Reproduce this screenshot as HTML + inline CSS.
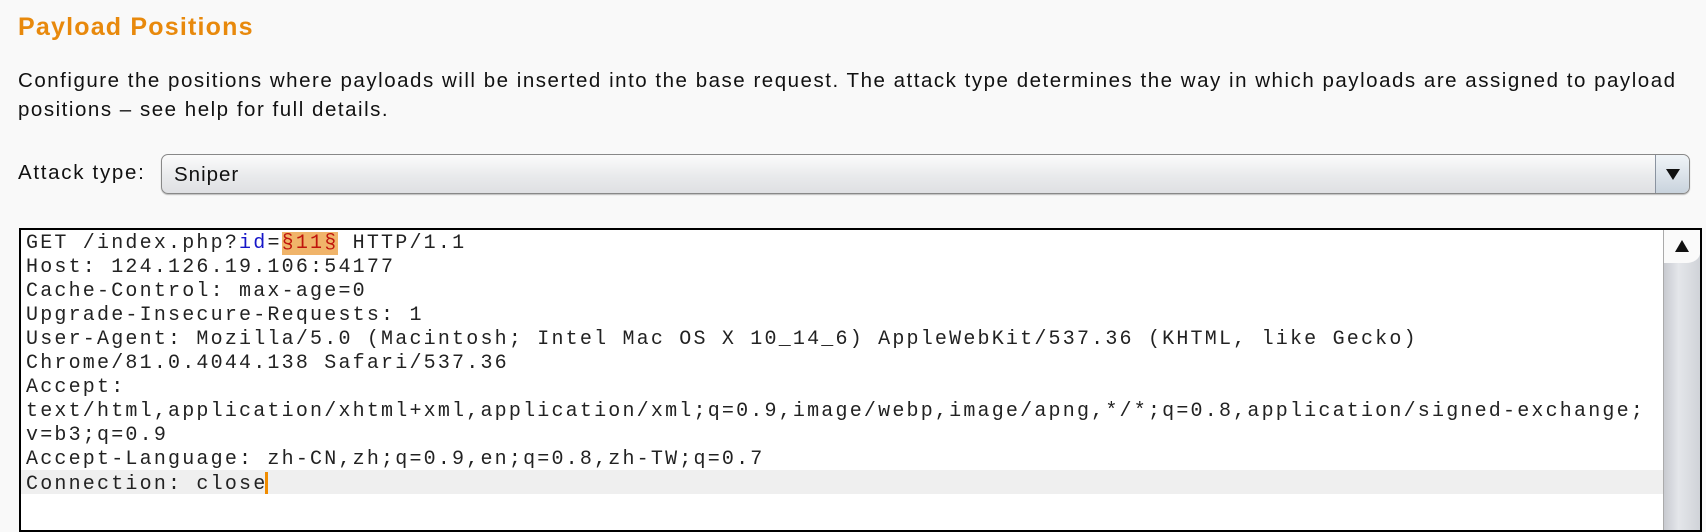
<!DOCTYPE html>
<html><head><meta charset="utf-8"><style>
html,body{margin:0;padding:0;width:1706px;height:520px;overflow:hidden;background:#f9f9f9;font-family:"Liberation Sans",sans-serif;}
.t{position:absolute;left:18px;top:13px;font-size:25px;letter-spacing:1.2px;font-weight:bold;color:#e8890c;white-space:nowrap;}
.d{position:absolute;left:18px;top:66px;font-size:20.5px;letter-spacing:1.52px;line-height:29px;color:#111;white-space:nowrap;}
.lab{position:absolute;left:18px;top:161px;font-size:20.5px;letter-spacing:1.7px;color:#111;}
.dd{position:absolute;left:161px;top:154px;width:1527px;height:38px;border:1px solid #888;border-radius:7px;background:linear-gradient(#fbfbfb,#e9eaec 55%,#dfe0e3);box-shadow:0 1px 1px #bbb;}
.dd span{position:absolute;left:12px;top:8px;font-size:20.5px;letter-spacing:1px;color:#111;}
.dd .ab{position:absolute;right:0;top:0;width:33px;height:38px;border-left:1px solid #8a93a0;border-radius:0 7px 7px 0;background:linear-gradient(#f0f4f8,#c9d3dd);}
.dd .ab:after{content:"";position:absolute;left:10px;top:14px;border-left:7px solid transparent;border-right:7px solid transparent;border-top:11px solid #111;}
.ed{position:absolute;left:19px;top:228px;width:1679px;height:300px;border:2px solid #000;background:#fff;}
.code{position:absolute;left:5px;top:2px;font-family:"Liberation Mono",monospace;font-size:20px;letter-spacing:2.2px;line-height:24px;color:#222;white-space:pre;}
.hl{position:absolute;left:0;top:240px;width:1642px;height:24px;background:#efefef;}
.p{background:#f0b46a;color:#c0140c;}
.b{color:#1616c8;}
.cur{display:inline-block;width:3px;height:22px;background:#f08c00;vertical-align:-5px;margin-left:-2px;}
.sb{position:absolute;right:0;top:0;width:36px;height:300px;background:linear-gradient(90deg,#c8cad0,#e4e6ea 40%,#d0d3d8);border-left:1px solid #aaa;}
.sb .up{position:absolute;left:0;top:0;width:36px;height:33px;background:#fafafa;border-bottom-right-radius:14px 10px;}
.sb .up:after{content:"";position:absolute;left:11px;top:10px;border-left:7px solid transparent;border-right:7px solid transparent;border-bottom:12px solid #111;}
</style></head><body>
<div class="t">Payload Positions</div>
<div class="d">Configure the positions where payloads will be inserted into the base request. The attack type determines the way in which payloads are assigned to payload<br>positions – see help for full details.</div>
<div class="lab">Attack type:</div>
<div class="dd"><span>Sniper</span><div class="ab"></div></div>
<div class="ed">
<div class="hl"></div>
<div class="code">GET /index.php?<span class="b">id</span>=<span class="p">§11§</span> HTTP/1.1
Host: 124.126.19.106:54177
Cache-Control: max-age=0
Upgrade-Insecure-Requests: 1
User-Agent: Mozilla/5.0 (Macintosh; Intel Mac OS X 10_14_6) AppleWebKit/537.36 (KHTML, like Gecko)
Chrome/81.0.4044.138 Safari/537.36
Accept:
text/html,application/xhtml+xml,application/xml;q=0.9,image/webp,image/apng,*/*;q=0.8,application/signed-exchange;
v=b3;q=0.9
Accept-Language: zh-CN,zh;q=0.9,en;q=0.8,zh-TW;q=0.7
Connection: close<span class="cur"></span></div>
<div class="sb"><div class="up"></div></div>
</div>
</body></html>
